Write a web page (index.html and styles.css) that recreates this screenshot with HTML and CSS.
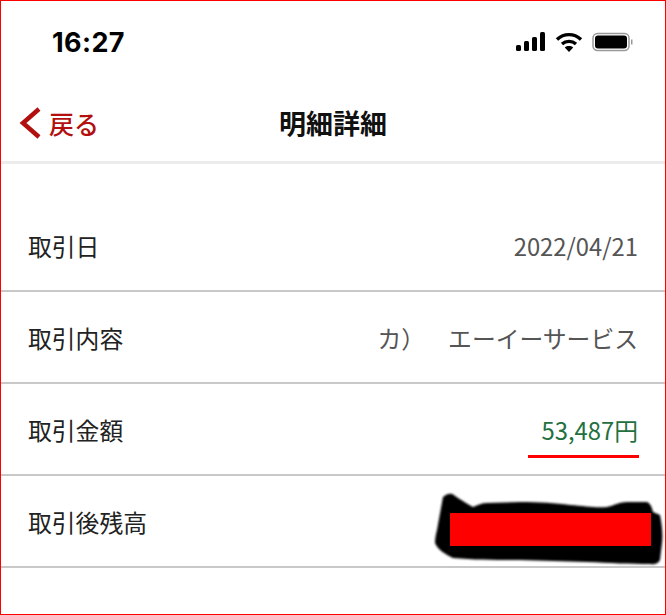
FILE: index.html
```html
<!DOCTYPE html>
<html lang="ja">
<head>
  <meta charset="UTF-8">
  <meta name="viewport" content="width=device-width, initial-scale=1.0">
  <title>明細詳細</title>
  <link rel="stylesheet" href="styles.css">
</head>
<body>
  <div class="screen">
    <div class="status-bar">
      <span class="time">16:27</span>
      <div class="status-icons">
        <svg class="icon-signal" width="30" height="20" viewBox="0 0 30 20">
          <rect x="0" y="13" width="5" height="6" rx="1.5"/>
          <rect x="8" y="9" width="5" height="10" rx="1.5"/>
          <rect x="16" y="5" width="5" height="14" rx="1.5"/>
          <rect x="24" y="0" width="5" height="19" rx="1.5"/>
        </svg>
        <svg class="icon-wifi" width="28" height="20" viewBox="0 0 28 20">
          <path d="M2 7.500C9 1 19 1 26 7.500" fill="none" stroke="#000" stroke-width="3.400"/>
          <path d="M7 12C11 8.500 17 8.500 21 12" fill="none" stroke="#000" stroke-width="3.400"/>
          <path d="M14 20L9.800 15.500C12 13.600 16 13.600 18.200 15.500Z"/>
        </svg>
        <svg class="icon-battery" width="42" height="20" viewBox="0 0 42 20">
          <rect x="1" y="1.500" width="36" height="17" rx="4.500" fill="none" stroke="#999" stroke-width="1.500"/>
          <rect x="3" y="3.500" width="32" height="13" rx="3"/>
          <rect x="39" y="7.500" width="1.500" height="5" fill="#999"/>
        </svg>
      </div>
    </div>

    <header class="nav-bar">
      <a class="back" href="#">
        <svg width="24" height="34" viewBox="0 0 24 34">
          <path d="M20 3L4 17L20 31" fill="none" stroke="#b2100f" stroke-width="4.500"/>
        </svg>
        <span>戻る</span>
      </a>
      <h1>明細詳細</h1>
    </header>

    <div class="detail-list">
      <div class="row">
        <span>取引日</span>
        <span class="value">2022/04/21</span>
      </div>
      <div class="row">
        <span>取引内容</span>
        <span class="value value-wide"><span>カ）</span><span>エーイーサービス</span></span>
      </div>
      <div class="row">
        <span>取引金額</span>
        <span class="value amount">53,487円</span>
      </div>
      <div class="row">
        <span>取引後残高</span>
        <div class="redaction">
          <svg width="237" height="82" viewBox="0 0 237 82">
            <defs>
              <filter id="soft"><feGaussianBlur stdDeviation="1.300"/></filter>
            </defs>
            <path filter="url(#soft)" d="M13 7C16 4 20 3 22 4C26 6 30 10 43 17C48 15 52 13 57 13L90 12C110 12 125 13 140 15C155 16 165 18 177 17C185 15 190 12 197 12L217 12C221 14 222 18 223 22L230 25C232 35 233 45 232 53L230 70C228 74 224 75 220 74C200 74 180 73 157 72L90 70C65 70 45 70 23 68C15 64 8 60 5 53C5 48 6 44 7 40Z"/>
          </svg>
          <div class="redaction-bar"></div>
        </div>
      </div>
    </div>
  </div>
</body>
</html>
```

FILE: styles.css
```css
* {
  box-sizing: border-box;
}
html, body {
  margin: 0;
  height: 100%;
}
body {
  font-family: "Noto Sans CJK JP", "Liberation Sans", sans-serif;
  background-color: #fff;
  color: #222;
}
.screen {
  height: 615px;
  border: 1.5px solid #ff0000;
  overflow: hidden;
}
.status-bar {
  height: 82px;
  padding: 0 31px 0 51px;
  display: flex;
  align-items: center;
  justify-content: space-between;
}
.time {
  font-family: Inter, "Liberation Sans", sans-serif;
  font-size: 27px;
  font-weight: 700;
  letter-spacing: 0.4px;
  color: #000;
}
.status-icons {
  display: flex;
  align-items: center;
  gap: 9px;
}
.nav-bar {
  height: 81px;
  position: relative;
  display: flex;
  align-items: center;
  justify-content: center;
  border-bottom: 3px solid #ececec;
}
.nav-bar h1 {
  margin: 0;
  font-size: 27px;
  font-weight: 700;
  color: #111;
}
.back {
  position: absolute;
  left: 18px;
  top: 22px;
  display: flex;
  align-items: center;
  gap: 6px;
  color: #b2100f;
  font-size: 25px;
  font-weight: 500;
  text-decoration: none;
}
.detail-list {
  margin-top: 36px;
}
.row {
  height: 92px;
  padding: 0 27px;
  display: flex;
  align-items: center;
  justify-content: space-between;
  position: relative;
  border-bottom: 2px solid #c8c8c8;
  font-size: 23.8px;
}
.value {
  color: #555;
  font-size: 23.8px;
}
.value-wide {
  display: flex;
  gap: 23px;
}
.amount {
  color: #23703f;
  position: relative;
}
.amount::after {
  content: "";
  position: absolute;
  left: -14px;
  right: -1px;
  bottom: -11px;
  height: 3px;
  background-color: #ff0000;
}
.redaction {
  position: absolute;
  left: 428.5px;
  top: 13.5px;
  width: 237px;
  height: 82px;
}
.redaction-bar {
  position: absolute;
  left: 20px;
  top: 23px;
  width: 201px;
  height: 33px;
  background-color: #ff0000;
}
```
